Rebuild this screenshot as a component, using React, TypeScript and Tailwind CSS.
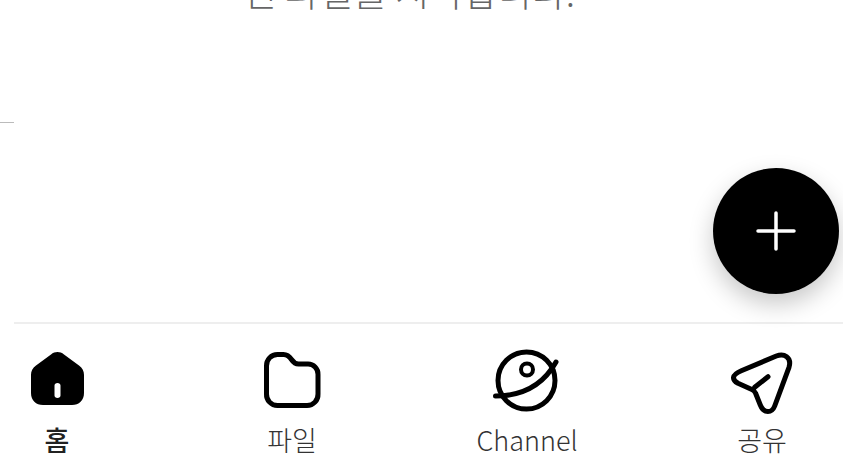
export default function App() {
  const font = { fontFamily: '"Noto Sans CJK KR", "Noto Sans", sans-serif' };
  return (
    <div style={font} className="relative flex h-[474px] w-[843px] flex-col overflow-hidden bg-white">
      <p className="-mt-[32px] h-[46px] pr-[25px] text-center text-[37px] leading-[46px] font-light text-[#666]">빈 파일을 시작합니다.</p>
      <div className="mt-[108px] h-px w-[14px] bg-[#bbb]" />
      <button className="absolute top-[168px] left-[713px] flex h-[126px] w-[126px] items-center justify-center rounded-full bg-black shadow-[0_10px_24px_rgba(0,0,0,0.22)]">
        <svg width="40" height="40" viewBox="0 0 40 40" fill="none" stroke="#fff" strokeWidth="3.5" strokeLinecap="round">
          <path d="M20 2v36M2 20h36" />
        </svg>
      </button>
      <nav className="mt-auto ml-[14px] flex h-[152px] justify-between border-t-2 border-[#eeeeee] pt-[22px] pr-[38px]">
        <div className="flex w-[86px] flex-col items-center">
          <svg width="70" height="70" viewBox="0 0 70 70">
            <path fillRule="evenodd" fill="#000" d="M29 8.500c4-3.200 9-3.200 13 0l15 11c3.500 2.600 5 5.500 5 9.500v18c0 7.500-5 12-12 12H21c-7 0-12-4.500-12-12V29c0-4 1.500-6.900 5-9.500zM35.500 37c-1.800 0-3 1-3 2.500v10c0 1.500 1.200 2.500 3 2.500s3-1 3-2.500v-10c0-1.500-1.200-2.500-3-2.500z" />
          </svg>
          <span className="mt-[5px] text-[27px] leading-[38px] font-medium text-[#222]">홈</span>
        </div>
        <div className="flex w-[86px] flex-col items-center">
          <svg width="70" height="70" viewBox="0 0 70 70" fill="none" stroke="#000" strokeWidth="5">
            <path d="M9.500 20a11 11 0 0 1 11-11.500h6c4 0 6 2 8 5 2 3 4 4.500 7 4.500h9a10 10 0 0 1 10.500 10.500V48a11 11 0 0 1-11 11.500H20.500a11 11 0 0 1-11-11.500z" />
          </svg>
          <span className="mt-[5px] text-[27px] leading-[38px] font-light text-[#333]">파일</span>
        </div>
        <div className="flex w-[86px] flex-col items-center">
          <svg width="70" height="70" viewBox="0 0 70 70" fill="none" stroke="#000" strokeWidth="5" strokeLinecap="round">
            <circle cx="34.500" cy="34.500" r="28.500" />
            <circle cx="35" cy="23.500" r="6" strokeWidth="4" />
            <path d="M3.500 50C27 50 50 41 64 16" />
          </svg>
          <span className="mt-[5px] text-[27px] leading-[38px] font-light whitespace-nowrap text-[#333]">Channel</span>
        </div>
        <div className="flex w-[86px] flex-col items-center">
          <svg width="70" height="70" viewBox="0 0 70 70" fill="none" stroke="#000" strokeWidth="5" strokeLinecap="round" strokeLinejoin="round">
            <path d="M14.300 24.700 49.300 10C57 7 65 11 62 21.300L47.700 60C45 67 37 68 33.300 59L28.500 47C27.500 45 26 44 24.300 43.300L11 37.300C5 34 4 29 14.300 24.700zM27.700 41.300 41 30.700" />
          </svg>
          <span className="mt-[5px] text-[27px] leading-[38px] font-light text-[#333]">공유</span>
        </div>
      </nav>
    </div>
  );
}
